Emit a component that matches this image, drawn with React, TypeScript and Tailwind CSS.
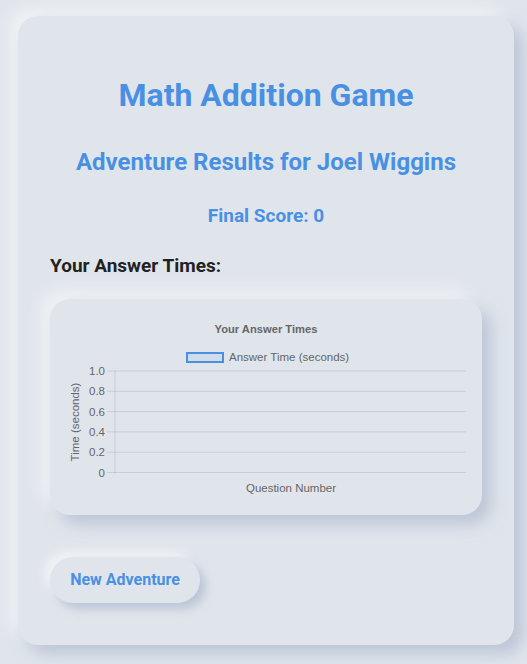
export default function App() {
  const ticks = ['1.0', '0.8', '0.6', '0.4', '0.2', '0'];

  return (
    <div className="min-h-[664px] w-full bg-[#e0e5ec] pt-4 pb-[19px] font-['Roboto',sans-serif]">
      {/* Card */}
      <div className="ml-[18px] w-[496px] h-[629px] rounded-[20px] bg-[#e0e5ec] px-8 pt-[61px] shadow-[9px_9px_16px_rgba(163,177,198,0.6),-9px_-9px_16px_rgba(255,255,255,0.5)]">
        <h1 className="text-center text-[32px] leading-9 font-bold text-[#4a90e2]">Math Addition Game</h1>
        <h2 className="mt-[33px] text-center text-2xl leading-8 font-bold text-[#4a90e2]">
          Adventure Results for Joel Wiggins
        </h2>
        <p className="mt-[24px] text-center text-[19px] leading-7 font-bold text-[#4a90e2]">Final Score: 0</p>
        <h3 className="mt-[22px] text-[19px] leading-7 font-bold text-[#222]">Your Answer Times:</h3>

        {/* Chart panel */}
        <div className="mt-[19px] w-[432px] h-[216px] rounded-[20px] bg-[#e0e5ec] shadow-[9px_9px_16px_rgba(163,177,198,0.6),-9px_-9px_16px_rgba(255,255,255,0.5)]">
          <svg width="432" height="216" className="font-['Liberation_Sans',Arial,sans-serif]">
            <text x="216" y="34" textAnchor="middle" fontSize="11.2" fontWeight="bold" fill="#666">
              Your Answer Times
            </text>
            <rect x="137" y="54" width="36" height="9" fill="rgba(74,144,226,0.1)" stroke="#4a90e2" strokeWidth="2" />
            <text x="179" y="62" fontSize="11.5" fill="#666">
              Answer Time (seconds)
            </text>
            {ticks.map((t, i) => {
              const y = 72 + i * 20.3;
              return (
                <g key={t}>
                  <line x1="57" x2="416" y1={y} y2={y} stroke="rgba(0,0,0,0.1)" strokeWidth="1" />
                  <text x="55" y={y + 4} textAnchor="end" fontSize="11.5" fill="#666">
                    {t}
                  </text>
                </g>
              );
            })}
            <line x1="65" x2="65" y1="72" y2="174" stroke="rgba(0,0,0,0.1)" strokeWidth="1" />
            <text x="241" y="193" textAnchor="middle" fontSize="11.5" fill="#666">
              Question Number
            </text>
            <text x="29" y="123" textAnchor="middle" fontSize="11.5" fill="#666" transform="rotate(-90 29 123)">
              Time (seconds)
            </text>
          </svg>
        </div>

        <button className="mt-[42px] h-[46px] w-[150px] rounded-full bg-[#e0e5ec] text-base font-bold text-[#4a90e2] shadow-[6px_6px_10px_rgba(163,177,198,0.6),-6px_-6px_10px_rgba(255,255,255,0.5)]">
          New Adventure
        </button>
      </div>
    </div>
  );
}
